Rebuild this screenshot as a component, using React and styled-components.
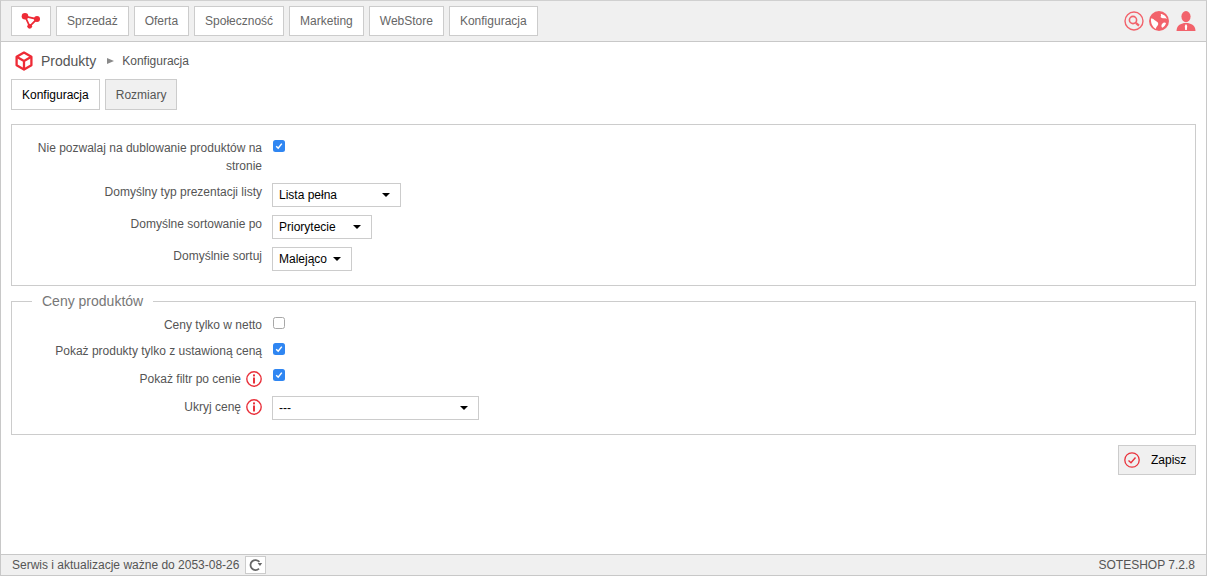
import React from "react";
import styled, { createGlobalStyle } from "styled-components";

const GlobalStyle = createGlobalStyle`
  html, body {
    margin: 0;
    height: 100%;
    background: #fff;
  }
  #root {
    height: 100%;
  }
  * {
    box-sizing: border-box;
  }
`;

const Page = styled.div`
  display: flex;
  flex-direction: column;
  height: 576px;
  border: 1px solid #c8c8c8;
  border-top-color: #d0d0d0;
  font-family: "Liberation Sans", Arial, sans-serif;
  font-size: 12px;
  line-height: 18px;
  color: #555;
`;

const TopBar = styled.header`
  display: flex;
  justify-content: space-between;
  align-items: center;
  height: 41px;
  padding: 0 10px;
  background: #f0f0f0;
  border-bottom: 1px solid #c8c8c8;
`;

const Nav = styled.nav`
  display: flex;
  gap: 5px;
`;

const NavButton = styled.a`
  display: flex;
  align-items: center;
  justify-content: center;
  height: 30px;
  padding: 0 10px;
  background: #fff;
  border: 1px solid #ccc;
  color: #666;
  font-size: 12px;
`;

const LogoButton = styled(NavButton)`
  width: 40px;
  padding: 0;
`;

const TopIcons = styled.div`
  display: flex;
  align-items: center;
  gap: 5px;

  svg:last-child {
    margin-left: 2px;
    margin-bottom: 1px;
  }
`;

const Content = styled.main`
  flex: 1;
  padding: 9px 10px 0;
`;

const Breadcrumb = styled.div`
  display: flex;
  align-items: center;
  height: 20px;
  margin-left: 4px;
`;

const CrumbTitle = styled.span`
  margin-left: 8px;
  font-size: 14px;
  color: #555;
`;

const CrumbArrow = styled.span`
  width: 0;
  height: 0;
  margin: 0 8px 0 11px;
  border-left: 7px solid #8a8a8a;
  border-top: 3.5px solid transparent;
  border-bottom: 3.5px solid transparent;
`;

const Tabs = styled.div`
  display: flex;
  gap: 5px;
  margin-top: 8px;
`;

const Tab = styled.a`
  display: flex;
  align-items: center;
  height: 31px;
  padding: 0 10px;
  border: 1px solid #ccc;
  background: ${(props) => (props.$active ? "#fff" : "#f0f0f0")};
  color: ${(props) => (props.$active ? "#000" : "#555")};
`;

const Panel = styled.fieldset`
  display: flex;
  flex-direction: column;
  gap: 8px;
  min-width: 0;
  margin: ${(props) => (props.$legend ? "6px 0 0" : "14px 0 0")};
  padding: ${(props) => (props.$legend ? "6px 0 14px" : "14px 0")};
  border: 1px solid #ccc;
`;

const Legend = styled.legend`
  margin-left: 20px;
  padding: 0 10px;
  font-size: 14px;
  line-height: 18px;
  color: #777;
`;

const Row = styled.div`
  display: flex;
  align-items: flex-start;
`;

const Label = styled.label`
  display: flex;
  justify-content: flex-end;
  align-items: center;
  gap: 5px;
  width: 250px;
  padding-top: ${(props) => (props.$info ? "2px" : "0")};
  text-align: right;
  color: #555;
`;

const Control = styled.div`
  margin-left: 10px;
`;

const Check = styled.span`
  display: flex;
  align-items: center;
  justify-content: center;
  width: 12px;
  height: 12px;
  margin-top: 1px;
  margin-left: 1px;
  border-radius: 2.5px;
  background: ${(props) => (props.$checked ? "#2f86f2" : "#fff")};
  border: ${(props) => (props.$checked ? "none" : "1px solid #a8a8a8")};
`;

const SelectBox = styled.div`
  position: relative;
  width: ${(props) => props.$width}px;
  height: 24px;
  background: #fff;
  border: 1px solid #ccc;

  &::after {
    content: "";
    position: absolute;
    top: 9px;
    right: 10px;
    border-top: 4px solid #000;
    border-left: 4px solid transparent;
    border-right: 4px solid transparent;
  }
`;

const SelectField = styled.select`
  display: block;
  width: 100%;
  height: 100%;
  padding: 0 6px;
  border: 0;
  background: transparent;
  appearance: none;
  outline: none;
  color: #000;
  font-family: inherit;
  font-size: 12px;
`;

const Actions = styled.div`
  display: flex;
  justify-content: flex-end;
  margin-top: 10px;
`;

const SaveButton = styled.button`
  display: flex;
  align-items: center;
  gap: 11px;
  width: 78px;
  height: 30px;
  padding: 0 0 0 5px;
  background: #f0f0f0;
  border: 1px solid #ccc;
  color: #000;
  font-family: inherit;
  font-size: 12px;
`;

const Footer = styled.footer`
  display: flex;
  justify-content: space-between;
  align-items: center;
  height: 21px;
  padding: 0 11px;
  background: #f0f0f0;
  border-top: 1px solid #c8c8c8;
  color: #555;
`;

const FooterLeft = styled.div`
  display: flex;
  align-items: center;
  gap: 6px;
`;

const RefreshButton = styled.span`
  display: flex;
  align-items: center;
  justify-content: center;
  width: 21px;
  height: 18px;
  background: #fff;
  border: 1px solid #ccc;
`;

const LogoIcon = () => (
  <svg width="20" height="16" viewBox="0 0 20 16">
    <path d="M4 3.3 L16 6 L8.7 13.3 Z" fill="none" stroke="#ee2b36" strokeWidth="1.8" />
    <circle cx="4" cy="3.3" r="3.3" fill="#ee2b36" />
    <circle cx="16" cy="6" r="3" fill="#ee2b36" />
    <circle cx="8.7" cy="13.3" r="2.4" fill="#ee2b36" />
  </svg>
);

const CubeIcon = () => (
  <svg width="18" height="20" viewBox="0 0 18 20">
    <g fill="none" stroke="#ee2b36" strokeWidth="2.3" strokeLinejoin="round">
      <path d="M9 1.6 L16.4 5.8 L16.4 14.3 L9 18.6 L1.6 14.3 L1.6 5.8 Z" />
      <path d="M1.6 5.8 L9 10 L16.4 5.8 M9 10 L9 18.6" />
    </g>
  </svg>
);

const SearchIcon = () => (
  <svg width="20" height="20" viewBox="0 0 20 20">
    <circle cx="10" cy="10" r="9" fill="none" stroke="#f2626b" strokeWidth="1.4" />
    <circle cx="9" cy="9" r="3.6" fill="none" stroke="#f2626b" strokeWidth="1.6" />
    <path d="M11.8 11.8 L15 14.6" stroke="#f2626b" strokeWidth="2.2" />
  </svg>
);

const GlobeIcon = () => (
  <svg width="20" height="20" viewBox="0 0 20 20">
    <circle cx="10" cy="10" r="10" fill="#f2626b" />
    <path
      d="M2 7.5 C4 7 5 8.5 6.2 9.5 C7.5 10.6 9.5 11 9.2 13 C9 15 7.2 15 7 18 C3.8 16.4 1.6 12.6 2 7.5 Z M11.5 3 C13 4.2 11 5.5 12 6.6 C13.6 8 15 6.4 17.8 8 C17.4 5.6 14.6 3 11.5 3 Z M13 13 C14 11.2 16 11 17 12 C16.4 14.6 15 16 13.2 16.8 C12.2 16 12.2 14.2 13 13 Z"
      fill="#fff"
    />
  </svg>
);

const UserIcon = () => (
  <svg width="20" height="20" viewBox="0 0 20 20">
    <ellipse cx="10" cy="5.6" rx="4.6" ry="5.6" fill="#f2626b" />
    <path d="M0.5 20 C0.8 14.5 4 13 8 12 L12 12 C16 13 19.2 14.5 19.5 20 Z" fill="#f2626b" />
    <path d="M10 13 L11.2 15 L10.8 19 L9.2 19 L8.8 15 Z" fill="#fff" />
  </svg>
);

const InfoIcon = () => (
  <svg width="16" height="16" viewBox="0 0 16 16">
    <circle cx="8" cy="8" r="7.2" fill="none" stroke="#e9323c" strokeWidth="1.4" />
    <rect x="7" y="3.4" width="2" height="2" fill="#e9323c" />
    <rect x="7" y="6.5" width="2" height="6" fill="#e9323c" />
  </svg>
);

const SaveIcon = () => (
  <svg width="16" height="16" viewBox="0 0 16 16">
    <circle cx="8" cy="8" r="7.2" fill="none" stroke="#e9323c" strokeWidth="1.3" />
    <path d="M4.5 8.5 L7 10.8 L11.5 5.5" fill="none" stroke="#e9323c" strokeWidth="1.4" />
  </svg>
);

const RefreshIcon = () => (
  <svg width="14" height="14" viewBox="0 0 14 14">
    <path d="M10 10.6 A5 5 0 1 1 10.4 3.9" fill="none" stroke="#666" strokeWidth="1.8" />
    <path d="M8.6 5 L13.2 5 L11 8 Z" fill="#666" />
  </svg>
);

const Checkbox = ({ checked }) => (
  <Check $checked={checked}>
    {checked && (
      <svg width="8" height="8" viewBox="0 0 8 8">
        <path d="M1.2 4.2 L3.2 6.2 L6.8 1.6" fill="none" stroke="#fff" strokeWidth="1.5" />
      </svg>
    )}
  </Check>
);

const Select = ({ width, value }) => (
  <SelectBox $width={width}>
    <SelectField defaultValue={value}>
      <option>{value}</option>
    </SelectField>
  </SelectBox>
);

const navItems = ["Sprzedaż", "Oferta", "Społeczność", "Marketing", "WebStore", "Konfiguracja"];

const App = () => {
  return (
    <Page>
      <GlobalStyle />
      <TopBar>
        <Nav>
          <LogoButton>
            <LogoIcon />
          </LogoButton>
          {navItems.map((item) => (
            <NavButton key={item}>{item}</NavButton>
          ))}
        </Nav>
        <TopIcons>
          <SearchIcon />
          <GlobeIcon />
          <UserIcon />
        </TopIcons>
      </TopBar>
      <Content>
        <Breadcrumb>
          <CubeIcon />
          <CrumbTitle>Produkty</CrumbTitle>
          <CrumbArrow />
          <span>Konfiguracja</span>
        </Breadcrumb>
        <Tabs>
          <Tab $active>Konfiguracja</Tab>
          <Tab>Rozmiary</Tab>
        </Tabs>
        <Panel>
          <Row>
            <Label>Nie pozwalaj na dublowanie produktów na stronie</Label>
            <Control>
              <Checkbox checked />
            </Control>
          </Row>
          <Row>
            <Label>Domyślny typ prezentacji listy</Label>
            <Control>
              <Select width={129} value="Lista pełna" />
            </Control>
          </Row>
          <Row>
            <Label>Domyślne sortowanie po</Label>
            <Control>
              <Select width={100} value="Priorytecie" />
            </Control>
          </Row>
          <Row>
            <Label>Domyślnie sortuj</Label>
            <Control>
              <Select width={80} value="Malejąco" />
            </Control>
          </Row>
        </Panel>
        <Panel $legend>
          <Legend>Ceny produktów</Legend>
          <Row>
            <Label>Ceny tylko w netto</Label>
            <Control>
              <Checkbox />
            </Control>
          </Row>
          <Row>
            <Label>Pokaż produkty tylko z ustawioną ceną</Label>
            <Control>
              <Checkbox checked />
            </Control>
          </Row>
          <Row>
            <Label $info>
              Pokaż filtr po cenie <InfoIcon />
            </Label>
            <Control>
              <Checkbox checked />
            </Control>
          </Row>
          <Row>
            <Label $info>
              Ukryj cenę <InfoIcon />
            </Label>
            <Control>
              <Select width={207} value="---" />
            </Control>
          </Row>
        </Panel>
        <Actions>
          <SaveButton>
            <SaveIcon />
            Zapisz
          </SaveButton>
        </Actions>
      </Content>
      <Footer>
        <FooterLeft>
          Serwis i aktualizacje ważne do 2053-08-26
          <RefreshButton>
            <RefreshIcon />
          </RefreshButton>
        </FooterLeft>
        <span>SOTESHOP 7.2.8</span>
      </Footer>
    </Page>
  );
};

export default App;
